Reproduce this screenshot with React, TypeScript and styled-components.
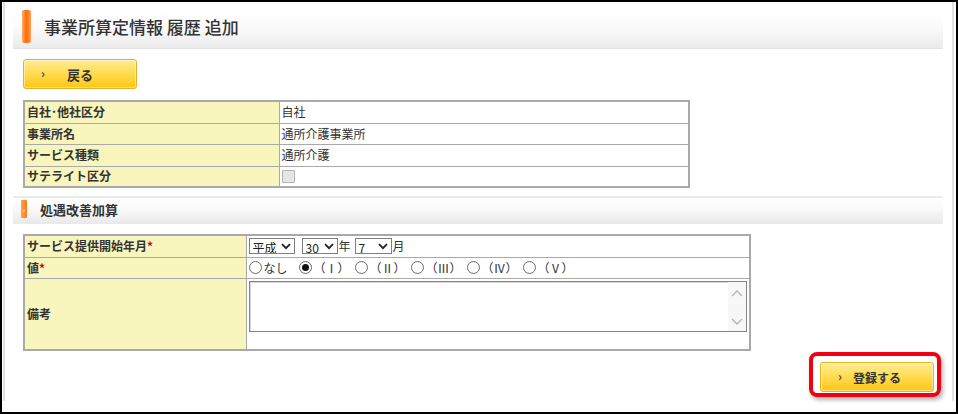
import React from "react";
import styled, { createGlobalStyle } from "styled-components";

const Global = createGlobalStyle`
  html, body { margin: 0; padding: 0; background: #fff; }
  body {
    font-family: "Noto Sans CJK JP", "Noto Sans", sans-serif;
    color: #333;
    overflow: hidden;
  }
  * { box-sizing: border-box; }
`;

const Screen = styled.div`
  width: 958px;
  height: 414px;
  border: 2px solid #000;
  padding: 0 2px 0 1px;
  display: flex;
  background: #fff;
`;

const Page = styled.div`
  flex: 1;
  height: 399px;
  border-left: 2px solid #e2e2e2;
  border-right: 2px solid #e2e2e2;
  padding: 8px 9px 0 8px;
  display: flex;
  flex-direction: column;
`;

const TitleBar = styled.div`
  height: 39px;
  display: flex;
  align-items: flex-start;
  gap: 13px;
  padding-left: 9px;
  background: linear-gradient(#ffffff 0%, #fbfbfb 45%, #ebebeb 100%);
  border-bottom: 1px solid #e2e2e2;
`;

const TitleMark = styled.span`
  width: 9px;
  height: 33px;
  border-radius: 2px;
  background: linear-gradient(to right, #ffae6a, #ff6c0a 45%, #ff7a1e 70%, #ffa760);
`;

const TitleText = styled.h1`
  margin: 0;
  font-size: 17px;
  font-weight: 500;
  line-height: 33px;
  color: #333;
`;

const Content = styled.div<{ $top: number }>`
  padding-left: 10px;
  margin-top: ${(p) => p.$top}px;
  display: flex;
  flex-direction: column;
  align-items: flex-start;
`;

const YellowButton = styled.button<{ $w: number; $fs: number }>`
  position: relative;
  width: ${(p) => p.$w}px;
  height: 30px;
  border: 1px solid #e4b424;
  border-radius: 3px;
  background: linear-gradient(#ffed96 0%, #ffdd55 45%, #ffc516 100%);
  box-shadow: inset 0 0 0 1px rgba(255, 255, 255, 0.45);
  font-family: inherit;
  font-weight: 700;
  font-size: ${(p) => p.$fs}px;
  color: #333;
  padding: 0;
  cursor: pointer;
  &::before {
    content: "›";
    position: absolute;
    left: 17px;
    top: 6px;
    font-size: 12px;
    line-height: 14px;
    font-weight: 700;
    color: #444;
  }
`;

const Table = styled.table<{ $w: number; $top: number }>`
  width: ${(p) => p.$w}px;
  margin-top: ${(p) => p.$top}px;
  border-collapse: collapse;
  border: 2px solid #a9a9a9;
  font-size: 12px;
  table-layout: fixed;
`;

const Row = styled.tr<{ $h: number }>`
  height: ${(p) => p.$h}px;
`;

const Label = styled.th<{ $w?: number }>`
  width: ${(p) => (p.$w ? `${p.$w}px` : "auto")};
  background: #f8f5bd;
  text-align: left;
  font-weight: 700;
  padding: 0 2px;
  border: 1px solid #a9a9a9;
  line-height: 16px;
  color: #333;
`;

const Value = styled.td`
  border: 1px solid #a9a9a9;
  padding: 0 2px;
  background: #fff;
  line-height: 16px;
  color: #333;
  vertical-align: middle;
`;

const TopValue = styled(Value)`
  vertical-align: top;
  padding-top: 2px;
`;

const Req = styled.span`
  color: #e00000;
`;

const DisabledBox = styled.span`
  display: block;
  width: 13px;
  height: 13px;
  border: 1px solid #b4b4b4;
  background: #e6e6e6;
  border-radius: 1px;
`;

const Inline = styled.div`
  display: flex;
  align-items: center;
  height: 20px;
`;

const SelectWrap = styled.span<{ $w: number; $ml: number }>`
  position: relative;
  display: inline-flex;
  width: ${(p) => p.$w}px;
  height: 16px;
  margin-left: ${(p) => p.$ml}px;
`;

const Select = styled.select`
  appearance: none;
  width: 100%;
  height: 100%;
  border: 1px solid #808080;
  border-radius: 0;
  background: #fff;
  font-family: "Noto Sans CJK JP", sans-serif;
  font-size: 12px;
  padding: 0 0 0 3px;
  color: #222;
  outline: none;
`;

const Chevron = styled.svg`
  position: absolute;
  right: 4px;
  top: 5px;
  pointer-events: none;
`;

const Unit = styled.span<{ $ml: number }>`
  margin-left: ${(p) => p.$ml}px;
  font-size: 12px;
`;

const RadioOption = styled.label<{ $w: number }>`
  display: inline-flex;
  align-items: center;
  width: ${(p) => p.$w}px;
  gap: 2px;
  font-size: 12px;
  white-space: nowrap;
`;

const Radio = styled.input.attrs({ type: "radio" })`
  appearance: none;
  margin: 0;
  width: 13px;
  height: 13px;
  border: 1px solid #6a6a6a;
  border-radius: 50%;
  background: #fff;
  display: inline-grid;
  place-content: center;
  &:checked::before {
    content: "";
    width: 7px;
    height: 7px;
    border-radius: 50%;
    background: #111;
  }
`;

const MemoBox = styled.div`
  position: relative;
  width: 498px;
  height: 51px;
`;

const Memo = styled.textarea`
  width: 100%;
  height: 100%;
  resize: none;
  border: 1px solid #858585;
  box-shadow: inset 1px 1px 0 #d6d6d6;
  font-family: inherit;
  font-size: 12px;
  overflow: hidden;
  padding: 2px;
  outline: none;
`;

const ScrollCol = styled.div`
  position: absolute;
  right: 1px;
  top: 1px;
  bottom: 1px;
  width: 18px;
  background: #f7f7f7;
  display: flex;
  flex-direction: column;
  justify-content: space-between;
  align-items: center;
  padding: 7px 0 5px;
`;

const SectionHead = styled.div`
  margin-top: 8px;
  height: 28px;
  border-top: 2px solid #ececec;
  background: linear-gradient(#ffffff 0%, #fafafa 40%, #e9e9e9 100%);
  display: flex;
  align-items: flex-start;
  gap: 13px;
  padding: 2px 0 0 8px;
`;

const SectionMark = styled.span`
  width: 6px;
  height: 18px;
  border-radius: 1px;
  background: linear-gradient(to right, #ffa24f, #ff7a14);
  color: #fff;
  font-size: 8px;
  line-height: 8px;
  display: flex;
  align-items: flex-end;
  justify-content: center;
  padding-bottom: 4px;
`;

const SectionTitle = styled.h2`
  margin: 0;
  font-size: 13px;
  font-weight: 700;
  line-height: 20px;
  color: #333;
`;

const Footer = styled.div`
  display: flex;
  justify-content: flex-end;
  padding-right: 2px;
  margin-top: 1px;
`;

const Highlight = styled.div`
  border: 4px solid #f00010;
  border-radius: 8px;
  padding: 6px 3px 1px 7px;
  box-shadow: 2px 3px 4px rgba(0, 0, 0, 0.3);
`;

const ChevronDown = () => (
  <Chevron width="10" height="7" viewBox="0 0 10 7">
    <path d="M1 1.2 L5 5.2 L9 1.2" fill="none" stroke="#222" strokeWidth="1.8" />
  </Chevron>
);

const romans = ["（Ⅰ）", "（Ⅱ）", "（Ⅲ）", "（Ⅳ）", "（Ⅴ）"];

export default function App() {
  return (
    <>
      <Global />
      <Screen>
        <Page>
          <TitleBar>
            <TitleMark />
            <TitleText>事業所算定情報 履歴 追加</TitleText>
          </TitleBar>

          <Content $top={10}>
            <YellowButton $w={114} $fs={13}>戻る</YellowButton>
            <Table $w={667} $top={11}>
              <tbody>
                <Row $h={22}>
                  <Label $w={255}>自社･他社区分</Label>
                  <Value>自社</Value>
                </Row>
                <Row $h={21}>
                  <Label>事業所名</Label>
                  <Value>通所介護事業所</Value>
                </Row>
                <Row $h={22}>
                  <Label>サービス種類</Label>
                  <Value>通所介護</Value>
                </Row>
                <Row $h={21}>
                  <Label>サテライト区分</Label>
                  <Value>
                    <DisabledBox />
                  </Value>
                </Row>
              </tbody>
            </Table>
          </Content>

          <SectionHead>
            <SectionMark>›</SectionMark>
            <SectionTitle>処遇改善加算</SectionTitle>
          </SectionHead>

          <Content $top={10}>
            <Table $w={728} $top={0}>
              <tbody>
                <Row $h={22}>
                  <Label $w={222}>
                    サービス提供開始年月<Req>*</Req>
                  </Label>
                  <Value>
                    <Inline>
                      <SelectWrap $w={46} $ml={0}>
                        <Select defaultValue="平成">
                          <option>平成</option>
                          <option>令和</option>
                        </Select>
                        <ChevronDown />
                      </SelectWrap>
                      <SelectWrap $w={36} $ml={7}>
                        <Select defaultValue="30">
                          <option>30</option>
                        </Select>
                        <ChevronDown />
                      </SelectWrap>
                      <Unit $ml={1}>年</Unit>
                      <SelectWrap $w={37} $ml={4}>
                        <Select defaultValue="7">
                          <option>7</option>
                        </Select>
                        <ChevronDown />
                      </SelectWrap>
                      <Unit $ml={1}>月</Unit>
                    </Inline>
                  </Value>
                </Row>
                <Row $h={21}>
                  <Label>
                    値<Req>*</Req>
                  </Label>
                  <Value>
                    <Inline>
                      <RadioOption $w={50}>
                        <Radio name="v" />
                        なし
                      </RadioOption>
                      {romans.map((r, i) => (
                        <RadioOption $w={56} key={r}>
                          <Radio name="v" defaultChecked={i === 0} />
                          {r}
                        </RadioOption>
                      ))}
                    </Inline>
                  </Value>
                </Row>
                <Row $h={72}>
                  <Label>備考</Label>
                  <TopValue>
                    <MemoBox>
                      <Memo />
                      <ScrollCol>
                        <svg width="12" height="8" viewBox="0 0 12 8">
                          <path d="M1 7 L6 2 L11 7" fill="none" stroke="#b5b5b5" strokeWidth="1.4" />
                        </svg>
                        <svg width="12" height="8" viewBox="0 0 12 8">
                          <path d="M1 1 L6 6 L11 1" fill="none" stroke="#b5b5b5" strokeWidth="1.4" />
                        </svg>
                      </ScrollCol>
                    </MemoBox>
                  </TopValue>
                </Row>
              </tbody>
            </Table>
          </Content>

          <Footer>
            <Highlight>
              <YellowButton $w={114} $fs={12}>登録する</YellowButton>
            </Highlight>
          </Footer>
        </Page>
      </Screen>
    </>
  );
}
